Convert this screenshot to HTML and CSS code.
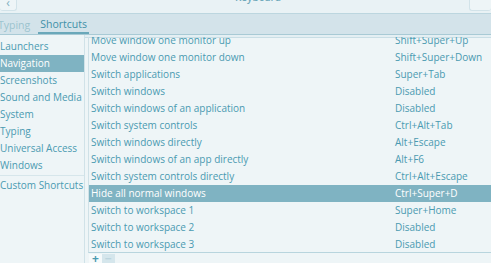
FILE: index.html
```html
<!DOCTYPE html>
<html lang="en">
<head>
  <meta charset="UTF-8">
  <title>Keyboard</title>
  <link rel="stylesheet" href="styles.css">
</head>
<body>
  <header class="header">
    <span class="head-btn back">&lsaquo;</span>
    <span class="title">Keyboard</span>
    <span class="head-btn right"></span>
  </header>
  <nav class="tabs">
    <span class="tab">Typing</span>
    <span class="tab active">Shortcuts</span>
  </nav>
  <main class="content">
    <ul class="sidebar">
      <li>Launchers</li>
      <li class="selected">Navigation</li>
      <li>Screenshots</li>
      <li>Sound and Media</li>
      <li>System</li>
      <li>Typing</li>
      <li>Universal Access</li>
      <li>Windows</li>
      <li class="sep">Custom Shortcuts</li>
    </ul>
    <section class="pane">
      <div class="list">
        <ul class="rows">
          <li><span>Move window one monitor up</span><span class="key">Shift+Super+Up</span></li>
          <li><span>Move window one monitor down</span><span class="key">Shift+Super+Down</span></li>
          <li><span>Switch applications</span><span class="key">Super+Tab</span></li>
          <li><span>Switch windows</span><span class="key">Disabled</span></li>
          <li><span>Switch windows of an application</span><span class="key">Disabled</span></li>
          <li><span>Switch system controls</span><span class="key">Ctrl+Alt+Tab</span></li>
          <li><span>Switch windows directly</span><span class="key">Alt+Escape</span></li>
          <li><span>Switch windows of an app directly</span><span class="key">Alt+F6</span></li>
          <li><span>Switch system controls directly</span><span class="key">Ctrl+Alt+Escape</span></li>
          <li class="selected"><span>Hide all normal windows</span><span class="key">Ctrl+Super+D</span></li>
          <li><span>Switch to workspace 1</span><span class="key">Super+Home</span></li>
          <li><span>Switch to workspace 2</span><span class="key">Disabled</span></li>
          <li><span>Switch to workspace 3</span><span class="key">Disabled</span></li>
        </ul>
      </div>
      <div class="toolbar">
        <span class="tool add">+</span>
        <span class="tool remove">&minus;</span>
      </div>
    </section>
  </main>
</body>
</html>
```

FILE: styles.css
```css
* {
  box-sizing: border-box;
}
body {
  margin: 0;
  width: 491px;
  height: 263px;
  overflow: hidden;
  background: #eef5f7;
  color: #4a9ab1;
  font-family: "Open Sans", "Noto Sans", sans-serif;
  font-size: 10px;
}
ul {
  list-style: none;
  margin: 0;
  padding: 0;
}
.header {
  height: 13px;
  background: #e9f2f5;
  display: flex;
  justify-content: space-between;
  align-items: flex-start;
  overflow: hidden;
}
.head-btn {
  width: 17px;
  height: 11px;
  border: 1px solid #d2e3e9;
  border-top: none;
  border-radius: 0 0 3px 3px;
  background: #eef5f7;
  color: #7fb0bf;
  font-size: 12px;
  line-height: 6px;
  text-align: center;
}
.back {
  border-left: none;
}
.right {
  width: 22px;
  border-right: none;
}
.title {
  margin-top: -9px;
  margin-left: 30px;
  font-weight: 600;
  color: #6fa9bb;
  line-height: 13px;
}
.tabs {
  height: 22px;
  background: #d3e3ea;
  border-top: 1px solid #bcd6df;
  border-bottom: 1px solid #a8cad5;
  box-shadow: 0 2px 0 #e4eff3, 0 3px 0 #c9dee5;
  display: flex;
  align-items: stretch;
  gap: 8px;
  font-size: 10.5px;
}
.tab {
  display: flex;
  align-items: center;
  color: #9cc3cf;
  padding-top: 1px;
}
.tab:first-child {
  margin-left: -2px;
}
.tab.active {
  color: #4190a8;
  padding: 1px 2px 0;
  border-bottom: 2px solid #6aa8ba;
}
.content {
  display: flex;
  height: 228px;
}
.sidebar {
  width: 85px;
  padding-top: 3px;
  border-right: 1px solid #d0e2e8;
  background: #eef5f7;
}
.sidebar li {
  height: 17px;
  line-height: 17px;
  white-space: nowrap;
}
.sidebar li.selected {
  background: #7fb3c2;
  color: #fff;
}
.sidebar li.sep {
  margin-top: 1px;
  border-top: 1px solid #d6e6eb;
  height: 19px;
  line-height: 18px;
}
.pane {
  flex: 1;
  margin-left: 3px;
  display: flex;
  flex-direction: column;
}
.list {
  height: 217px;
  margin-top: 2px;
  overflow: hidden;
  border-left: 1px solid #cfe1e7;
  border-bottom: 1px solid #b8d5de;
}
.rows {
  margin-top: -5px;
}
.rows li {
  height: 17px;
  line-height: 17px;
  display: flex;
  padding-left: 2px;
  white-space: nowrap;
}
.rows li span:first-child {
  width: 304px;
}
.rows li.selected {
  background: #7fb3c2;
  color: #fff;
}
.toolbar {
  display: flex;
  padding-left: 1px;
  padding-top: 1px;
}
.tool {
  width: 13px;
  height: 9px;
  line-height: 9px;
  text-align: center;
  font-size: 12px;
  font-weight: 700;
  background: #f6fafb;
  color: #4a9ab1;
  overflow: hidden;
}
.remove {
  background: #d5e6ec;
  color: #bcd5de;
}
```
